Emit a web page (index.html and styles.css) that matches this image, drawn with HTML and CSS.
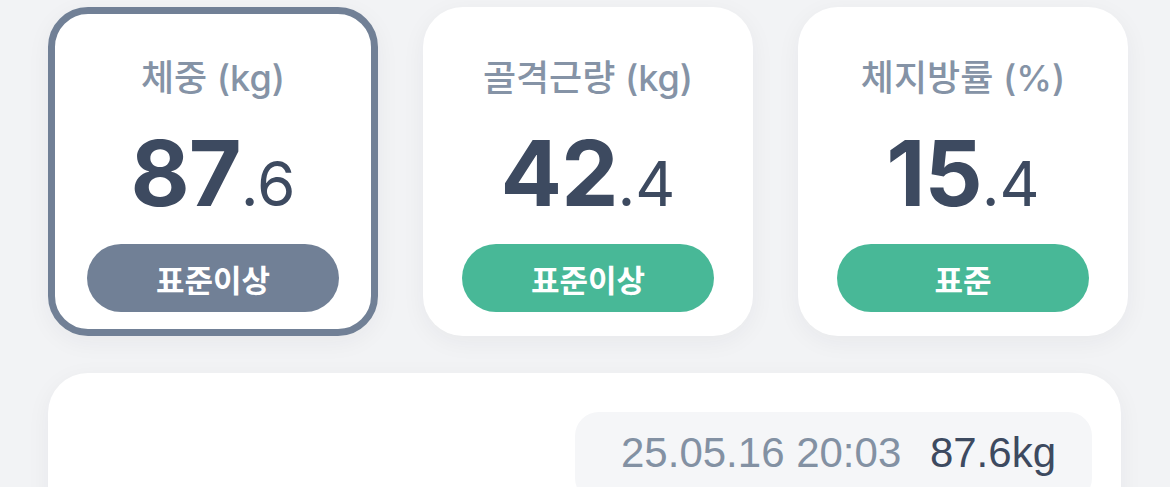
FILE: index.html
```html
<!DOCTYPE html>
<html lang="ko">
<head>
<meta charset="utf-8">
<link rel="stylesheet" href="styles.css">
</head>
<body>
<main class="page">
  <section class="cards">
    <div class="card card-active">
      <div class="title">체중 (kg)</div>
      <div class="num"><span class="int">87</span><span class="dec">.6</span></div>
      <div class="badge badge-gray">표준이상</div>
    </div>
    <div class="card">
      <div class="title">골격근량 (kg)</div>
      <div class="num"><span class="int">42</span><span class="dec">.4</span></div>
      <div class="badge badge-green">표준이상</div>
    </div>
    <div class="card">
      <div class="title">체지방률 (%)</div>
      <div class="num"><span class="int">15</span><span class="dec">.4</span></div>
      <div class="badge badge-green">표준</div>
    </div>
  </section>
  <section class="history">
    <div class="record">
      <span class="date">25.05.16 20:03</span>
      <span class="value">87.6kg</span>
    </div>
  </section>
</main>
</body>
</html>
```
FILE: styles.css
```css
html, body {
  margin: 0;
  padding: 0;
  background: #f2f3f5;
  overflow: hidden;
}
.page {
  padding: 7px 0 0 48px;
  height: 480px;
  overflow: hidden;
}
.cards {
  display: grid;
  grid-template-columns: 330px 330px 330px;
  column-gap: 45px;
}
.card {
  box-sizing: border-box;
  height: 329px;
  border: 7px solid transparent;
  border-radius: 40px;
  background: #ffffff;
  box-shadow: 0 6px 24px rgba(30, 40, 60, 0.05);
  display: flex;
  flex-direction: column;
  align-items: center;
  padding-top: 42px;
}
.card-active {
  border-color: #718096;
}
.title {
  font-family: Inter, "Noto Sans CJK KR", sans-serif;
  font-size: 36px;
  font-weight: 500;
  line-height: 44px;
  color: #8593a6;
}
.num {
  margin-top: 28px;
  font-family: Inter, "Noto Sans CJK KR", sans-serif;
  color: #3d4a60;
  line-height: 1;
  height: 91px;
}
.int {
  font-size: 91px;
  font-weight: 700;
  letter-spacing: -1px;
}
.dec {
  font-size: 62px;
  font-weight: 400;
}
.badge {
  margin-top: 25px;
  width: 252px;
  height: 68px;
  border-radius: 34px;
  display: flex;
  align-items: center;
  justify-content: center;
  font-family: "Noto Sans CJK KR", sans-serif;
  font-weight: 700;
  font-size: 31px;
  color: #ffffff;
}
.badge-gray {
  background: #718096;
}
.badge-green {
  background: #48b897;
}
.history {
  margin-top: 37px;
  width: 1073px;
  height: 200px;
  box-sizing: border-box;
  background: #ffffff;
  border-radius: 40px;
  box-shadow: 0 6px 24px rgba(30, 40, 60, 0.05);
  padding: 39px 29px 0 0;
  display: flex;
  justify-content: flex-end;
  align-items: flex-start;
}
.record {
  width: 517px;
  height: 90px;
  box-sizing: border-box;
  background: #f5f6f8;
  border-radius: 24px;
  padding: 17px 36px 0 46px;
  display: flex;
  align-items: baseline;
  justify-content: space-between;
  font-family: "Liberation Sans", Arial, sans-serif;
  font-size: 42px;
  line-height: 48px;
}
.date {
  color: #8391a3;
}
.value {
  color: #3d4a60;
}
```
